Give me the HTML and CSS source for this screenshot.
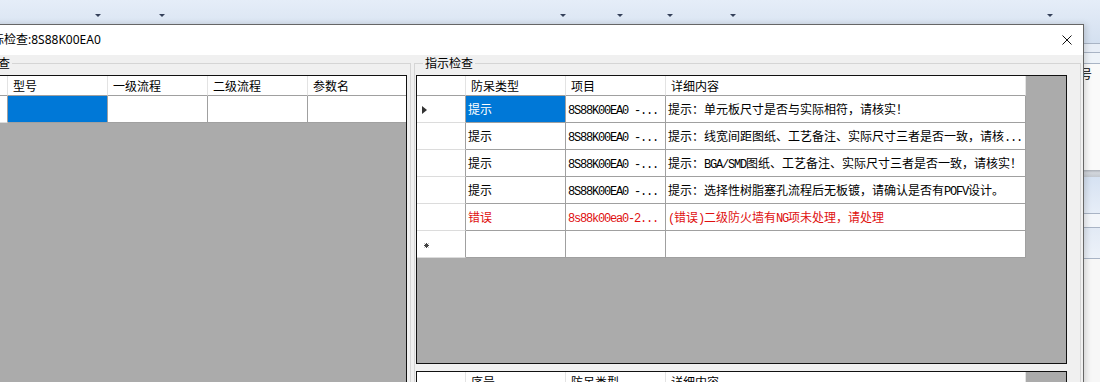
FILE: index.html
```html
<!DOCTYPE html>
<html lang="zh-CN">
<head>
  <meta charset="UTF-8">
  <title>指标检查:8S88K00EA0</title>
  <link rel="stylesheet" href="styles.css">
</head>
<body>

  <div class="app">
    <!-- background window toolbar -->
    <div class="toolbar">
      <span class="drop"></span>
      <span class="drop"></span>
      <span class="drop"></span>
      <span class="drop"></span>
      <span class="drop"></span>
      <span class="drop"></span>
      <span class="drop"></span>
    </div>
    <div class="bg-row bg-r1"></div>
    <div class="bg-row bg-r2"></div>
    <div class="bg-head"><span class="bg-label">型号</span></div>
    <div class="bg-split"></div>
    <div class="bg-band"></div>
    <div class="bg-row bg-r3"></div>
    <div class="bg-row bg-r4"></div>
    <div class="bg-rest"></div>

    <!-- dialog window -->
    <div class="dialog">
      <div class="titlebar">
        <span class="title">指标检查:8S88K00EA0</span>
        <svg class="close" width="10" height="10" viewBox="0 0 10 10">
          <path d="M0.5,0.5 L9.5,9.5 M9.5,0.5 L0.5,9.5" stroke="#111" stroke-width="1" fill="none"></path>
        </svg>
      </div>

      <div class="dialog-body">
        <!-- left group -->
        <div class="group group-left">
          <div class="group-title">参数检查</div>
          <div class="grid grid-left">
            <div class="row head">
              <div class="cell rh"></div>
              <div class="cell">型号</div>
              <div class="cell">一级流程</div>
              <div class="cell">二级流程</div>
              <div class="cell">参数名</div>
            </div>
            <div class="row">
              <div class="cell rh"></div>
              <div class="cell sel"></div>
              <div class="cell"></div>
              <div class="cell"></div>
              <div class="cell"></div>
            </div>
          </div>
        </div>

        <!-- right group -->
        <div class="group group-right">
          <div class="group-title">指示检查</div>
          <div class="grid grid-main">
            <div class="row head">
              <div class="cell rh"></div>
              <div class="cell">防呆类型</div>
              <div class="cell">项目</div>
              <div class="cell wide">详细内容</div>
            </div>
            <div class="row">
              <div class="cell rh"><span class="arrow"></span></div>
              <div class="cell sel">提示</div>
              <div class="cell"><span class="lat">8S88K00EA0 -...</span></div>
              <div class="cell wide">提示：单元板尺寸是否与实际相符，请核实！</div>
            </div>
            <div class="row">
              <div class="cell rh"></div>
              <div class="cell">提示</div>
              <div class="cell"><span class="lat">8S88K00EA0 -...</span></div>
              <div class="cell wide">提示：线宽间距图纸、工艺备注、实际尺寸三者是否一致，请核<span class="lat">...</span></div>
            </div>
            <div class="row">
              <div class="cell rh"></div>
              <div class="cell">提示</div>
              <div class="cell"><span class="lat">8S88K00EA0 -...</span></div>
              <div class="cell wide">提示：<span class="lat">BGA/SMD</span>图纸、工艺备注、实际尺寸三者是否一致，请核实！</div>
            </div>
            <div class="row">
              <div class="cell rh"></div>
              <div class="cell">提示</div>
              <div class="cell"><span class="lat">8S88K00EA0 -...</span></div>
              <div class="cell wide">提示：选择性树脂塞孔流程后无板镀，请确认是否有<span class="lat">POFV</span>设计。</div>
            </div>
            <div class="row err">
              <div class="cell rh"></div>
              <div class="cell">错误</div>
              <div class="cell"><span class="lat">8s88k00ea0-2...</span></div>
              <div class="cell wide"><span class="lat">(</span>错误<span class="lat">)</span>二级防火墙有<span class="lat">NG</span>项未处理，请处理</div>
            </div>
            <div class="row">
              <div class="cell rh">
                <svg class="star" width="5" height="5" viewBox="0 0 5 5">
                  <path d="M2.5,0 V5 M0,2.5 H5 M0.7,0.7 L4.3,4.3 M4.3,0.7 L0.7,4.3" stroke="#444" stroke-width="1" fill="none"></path>
                </svg>
              </div>
              <div class="cell"></div>
              <div class="cell"></div>
              <div class="cell wide"></div>
            </div>
          </div>

          <div class="grid grid-sub">
            <div class="row head">
              <div class="cell rh"></div>
              <div class="cell">序号</div>
              <div class="cell">防呆类型</div>
              <div class="cell wide">详细内容</div>
            </div>
          </div>
        </div>
      </div>
    </div>
  </div>

</body>
</html>
```

FILE: styles.css
```css
body {
  margin: 0;
  font-family: "Noto Sans CJK SC", "Noto Sans", sans-serif;
  font-size: 12px;
  color: #000;
  background: #f7f7f7;
  overflow: hidden;
}

.app {
  position: relative;
  width: 1100px;
  height: 382px;
  overflow: hidden;
  display: flex;
  flex-direction: column;
}

/* background window */
.toolbar {
  flex: none;
  height: 29px;
  padding-top: 14px;
  display: flex;
  align-items: flex-start;
  background: linear-gradient(#e5edf8, #d4e0f0);
  border-bottom: 1px solid #a9b4c5;
}

.drop {
  flex: none;
  width: 0;
  height: 0;
  border-left: 3px solid transparent;
  border-right: 3px solid transparent;
  border-top: 3px solid #34405a;
}

.drop:nth-child(1) { margin-left: 95px; }
.drop:nth-child(2) { margin-left: 58px; }
.drop:nth-child(3) { margin-left: 395px; }
.drop:nth-child(4) { margin-left: 51px; }
.drop:nth-child(5) { margin-left: 44px; }
.drop:nth-child(6) { margin-left: 57px; }
.drop:nth-child(7) { margin-left: 311px; }

.bg-row {
  flex: none;
  border-bottom: 1px solid #a9b4c5;
}

.bg-r1 {
  height: 8px;
  background: #e8eef7;
}

.bg-r2 {
  height: 10px;
  background: #eef3f9;
}

.bg-head {
  flex: none;
  height: 106px;
  display: flex;
  justify-content: flex-end;
  padding-right: 8px;
  background: #fafafa;
}

.bg-label {
  line-height: 20px;
}

.bg-split {
  flex: none;
  height: 7px;
  background: linear-gradient(#a9aeb6, #d2d6dc 40%, #c3c8cf);
}

.bg-band {
  flex: none;
  height: 36px;
  background: linear-gradient(#d6e2f2, #e7eef8);
  border-bottom: 1px solid #a9b4c5;
}

.bg-r3 {
  height: 13px;
  background: #f3f6fa;
}

.bg-r4 {
  height: 30px;
  background: linear-gradient(#e2eaf5, #edf2f9);
}

.bg-rest {
  flex: 1;
  background: #f7f7f7;
}

/* dialog */
.dialog {
  position: absolute;
  top: 24px;
  left: -47px;
  width: 1131px;
  height: 370px;
  box-sizing: border-box;
  border: 1px solid #666;
  border-bottom: none;
  background: #f0f0f0;
  box-shadow: 2px 0 6px rgba(0, 0, 0, 0.15);
  display: flex;
  flex-direction: column;
  overflow: hidden;
}

.titlebar {
  flex: none;
  height: 30px;
  padding-left: 26px;
  display: flex;
  align-items: center;
  background: #fff;
}

.title {
  font-family: "Noto Sans", "Noto Sans CJK SC", sans-serif;
  font-size: 12px;
  line-height: 16px;
}

.close {
  margin-left: auto;
  margin-right: 11px;
  display: block;
}

.dialog-body {
  flex: 1;
  display: flex;
  gap: 3px;
  padding: 8px 2px 0 2px;
}

.group {
  flex: none;
  box-sizing: border-box;
  border: 1px solid #d5d5d5;
  border-bottom: none;
  padding: 0 1px;
  display: flex;
  flex-direction: column;
  align-items: flex-start;
}

.group-left {
  width: 455px;
}

.group-right {
  width: 667px;
}

.group-title {
  margin: -8px 0 0 7px;
  padding: 0 2px;
  line-height: 14px;
  background: #f0f0f0;
}

.group-left .group-title {
  margin-left: 2px;
}

/* data grids */
.grid {
  flex: none;
  box-sizing: border-box;
  border: 1px solid #111;
  background: #ababab;
  overflow: hidden;
}

.grid-left {
  margin-top: 5px;
  width: 449px;
  height: 320px;
}

.grid-main {
  margin-top: 5px;
  width: 651px;
  height: 289px;
}

.grid-sub {
  margin-top: 7px;
  width: 651px;
  height: 60px;
}

.row {
  display: flex;
  height: 27px;
}

.row.head {
  height: 20px;
}

.cell {
  flex: none;
  box-sizing: border-box;
  width: 100px;
  padding-left: 2px;
  border-right: 1px solid #a0a0a0;
  border-bottom: 1px solid #a0a0a0;
  background: #fff;
  line-height: 26px;
  white-space: nowrap;
  overflow: hidden;
}

.cell.rh {
  width: 49px;
  padding: 0;
  border-bottom-color: #dcdcdc;
}

.cell.wide {
  width: 360px;
}

.head .cell {
  padding-left: 5px;
  line-height: 19px;
  border-right-color: #e3e3e3;
  border-bottom-color: #a0a0a0;
}

.head .cell.rh {
  padding: 0;
}

.cell.sel {
  background: #0078d7;
  color: #fff;
}

.row.err .cell {
  color: #e01010;
}

.lat {
  font-family: "Liberation Mono", monospace;
  letter-spacing: -1.2px;
}

.arrow {
  display: block;
  width: 0;
  height: 0;
  margin: 10px 0 0 5px;
  border-left: 5px solid #333;
  border-top: 4.5px solid transparent;
  border-bottom: 4.5px solid transparent;
}

.star {
  display: block;
  margin: 12px 0 0 7px;
}
```
